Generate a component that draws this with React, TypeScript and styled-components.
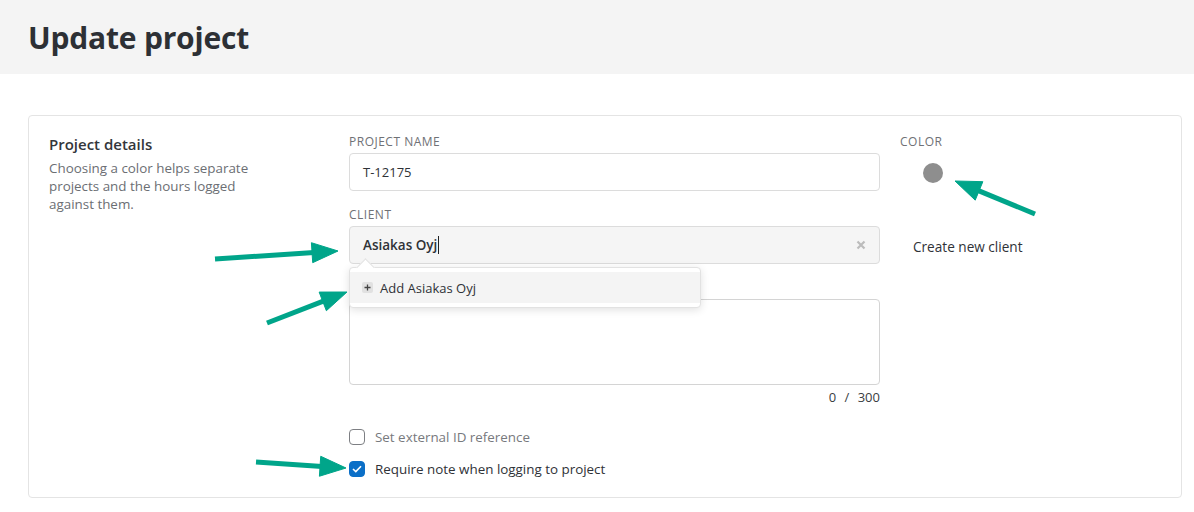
import React from 'react';
import styled, { createGlobalStyle } from 'styled-components';

const GlobalStyle = createGlobalStyle`
  * { box-sizing: border-box; }
  body {
    margin: 0;
    background: #fff;
    font-family: 'Open Sans', 'Noto Sans', sans-serif;
    color: #2f3237;
  }
`;

const Page = styled.div`
  position: relative;
  width: 1194px;
  height: 512px;
  overflow: hidden;
`;

const Header = styled.header`
  height: 74px;
  background: #f4f4f4;
  padding: 0 28px;
  display: flex;
  align-items: center;

  h1 {
    margin: 0;
    font-size: 30px;
    font-weight: 700;
    letter-spacing: -0.2px;
    color: #2d3035;
  }
`;

const Content = styled.main`
  padding: 41px 12px 0 28px;
`;

const Card = styled.section`
  border: 1px solid #e4e4e4;
  border-radius: 4px;
  padding: 18px 20px 20px 20px;
  display: grid;
  grid-template-columns: 280px 531px 1fr;
  column-gap: 20px;
`;

const Intro = styled.div`
  h2 {
    margin: 0 0 5px;
    font-size: 15px;
    line-height: 20px;
    font-weight: 600;
    color: #33363b;
  }

  p {
    margin: 0;
    width: 215px;
    font-size: 13.4px;
    line-height: 18px;
    color: #6b6e73;
  }
`;

const Fields = styled.div`
  display: flex;
  flex-direction: column;
`;

const Field = styled.div`
  position: relative;
  margin-bottom: 16px;
`;

const Label = styled.label<{ $covered?: boolean }>`
  display: block;
  font-size: 12px;
  line-height: 16px;
  letter-spacing: 0.5px;
  text-transform: uppercase;
  color: #6f7175;
  margin-bottom: 3px;
  visibility: ${({ $covered }) => ($covered ? 'hidden' : 'visible')};
`;

const InputBox = styled.div<{ $filled?: boolean }>`
  height: 38px;
  border: 1px solid #dcdcdc;
  border-radius: 4px;
  background: ${({ $filled }) => ($filled ? '#f5f5f5' : '#fff')};
  display: flex;
  align-items: center;
  padding: 0 13px;
  font-size: ${({ $filled }) => ($filled ? '13.5px' : '13px')};
  color: #2f3237;
  font-weight: ${({ $filled }) => ($filled ? 600 : 400)};
`;

const Caret = styled.span`
  display: inline-block;
  width: 1px;
  height: 18px;
  margin-left: 1px;
  background: #222;
`;

const Clear = styled.span`
  margin-left: auto;
  color: #bcbcbc;
  display: flex;
`;

const TextArea = styled.div`
  height: 86px;
  border: 1px solid #d4d4d4;
  border-radius: 4px;
  background: #fff;
`;

const Counter = styled.div`
  text-align: right;
  font-size: 13px;
  line-height: 16px;
  color: #3a3d42;
  margin-top: 4px;
  word-spacing: 5px;
`;

const Menu = styled.div`
  position: absolute;
  left: 0;
  top: 60px;
  width: 352px;
  padding: 4px 0;
  background: #fff;
  border: 1px solid #e2e2e2;
  border-radius: 4px;
  box-shadow: 0 2px 8px rgba(0, 0, 0, 0.12);
  z-index: 2;

  &::before {
    content: '';
    position: absolute;
    top: -7px;
    left: 9px;
    width: 12px;
    height: 12px;
    background: #fff;
    border-left: 1px solid #e2e2e2;
    border-top: 1px solid #e2e2e2;
    transform: rotate(45deg);
  }
`;

const MenuItem = styled.div`
  position: relative;
  height: 31px;
  display: flex;
  align-items: center;
  gap: 7px;
  padding: 0 12px;
  background: #f4f4f4;
  font-size: 13px;
  color: #2f3237;
`;

const PlusBox = styled.span`
  width: 11px;
  height: 11px;
  border-radius: 2px;
  background: #e1e1e1;
  display: flex;
  align-items: center;
  justify-content: center;
`;

const Checks = styled.div`
  display: flex;
  flex-direction: column;
  gap: 16px;
  margin-top: 24px;
`;

const CheckRow = styled.label<{ $checked?: boolean }>`
  display: flex;
  align-items: center;
  gap: 10px;
  font-size: 13.4px;
  line-height: 16px;
  color: ${({ $checked }) => ($checked ? '#2f3237' : '#77797d')};
`;

const Box = styled.span<{ $checked?: boolean }>`
  width: 16px;
  height: 16px;
  border-radius: 4px;
  border: 1px solid ${({ $checked }) => ($checked ? '#0b6fc7' : '#7d7f83')};
  background: ${({ $checked }) => ($checked ? '#0b6fc7' : '#fff')};
  display: flex;
  align-items: center;
  justify-content: center;
`;

const Side = styled.div`
  display: flex;
  flex-direction: column;
  align-items: flex-start;
`;

const Swatch = styled.span<{ $color: string }>`
  width: 20px;
  height: 20px;
  border-radius: 50%;
  background: ${({ $color }) => $color};
  margin: 10px 0 0 23px;
`;

const LinkButton = styled.button`
  margin-top: 50px;
  border: 0;
  background: none;
  padding: 4px 13px;
  font-family: inherit;
  font-size: 13.6px;
  color: #2f3237;
  cursor: pointer;
`;

const Arrows = styled.svg`
  position: absolute;
  inset: 0;
  pointer-events: none;
  z-index: 3;
`;

const ARROW_COLOR = '#00a58a';

function Arrow({ x1, y1, x2, y2 }: { x1: number; y1: number; x2: number; y2: number }) {
  const dx = x2 - x1;
  const dy = y2 - y1;
  const len = Math.hypot(dx, dy);
  const ux = dx / len;
  const uy = dy / len;
  const head = 26;
  const bx = x2 - ux * head;
  const by = y2 - uy * head;
  const w = 10;
  const px = -uy * w;
  const py = ux * w;
  return (
    <g fill={ARROW_COLOR} stroke={ARROW_COLOR}>
      <line x1={x1} y1={y1} x2={bx + ux * 2} y2={by + uy * 2} strokeWidth={5} />
      <polygon points={`${x2},${y2} ${bx + px},${by + py} ${bx - px},${by - py}`} strokeWidth={1} />
    </g>
  );
}

export default function App() {
  return (
    <Page>
      <GlobalStyle />
      <Header>
        <h1>Update project</h1>
      </Header>
      <Content>
        <Card>
          <Intro>
            <h2>Project details</h2>
            <p>Choosing a color helps separate projects and the hours logged against them.</p>
          </Intro>
          <Fields>
            <Field>
              <Label>Project name</Label>
              <InputBox>T-12175</InputBox>
            </Field>
            <Field>
              <Label>Client</Label>
              <InputBox $filled>
                Asiakas Oyj
                <Caret />
                <Clear>
                  <svg width="10" height="10" viewBox="0 0 10 10">
                    <path d="M1.5 1.5 L8.5 8.5 M8.5 1.5 L1.5 8.5" stroke="currentColor" strokeWidth="2.2" />
                  </svg>
                </Clear>
              </InputBox>
              <Menu>
                <MenuItem>
                  <PlusBox>
                    <svg width="7" height="7" viewBox="0 0 7 7">
                      <path d="M3.5 0.5 V6.5 M0.5 3.5 H6.5" stroke="#444" strokeWidth="1.3" />
                    </svg>
                  </PlusBox>
                  Add Asiakas Oyj
                </MenuItem>
              </Menu>
            </Field>
            <div>
              <Label $covered>Description</Label>
              <TextArea />
              <Counter>0 / 300</Counter>
            </div>
            <Checks>
              <CheckRow>
                <Box />
                Set external ID reference
              </CheckRow>
              <CheckRow $checked>
                <Box $checked>
                  <svg width="10" height="8" viewBox="0 0 10 8">
                    <path d="M1 4 L3.8 6.6 L9 1.2" fill="none" stroke="#fff" strokeWidth="1.6" />
                  </svg>
                </Box>
                Require note when logging to project
              </CheckRow>
            </Checks>
          </Fields>
          <Side>
            <Label>Color</Label>
            <Swatch $color="#8e8e8e" />
            <LinkButton>Create new client</LinkButton>
          </Side>
        </Card>
      </Content>
      <Arrows width="1194" height="512">
        <Arrow x1={215} y1={259} x2={338} y2={251} />
        <Arrow x1={267} y1={323} x2={347} y2={292} />
        <Arrow x1={256} y1={462} x2={346} y2={468} />
        <Arrow x1={1035} y1={214} x2={955} y2={181} />
      </Arrows>
    </Page>
  );
}
